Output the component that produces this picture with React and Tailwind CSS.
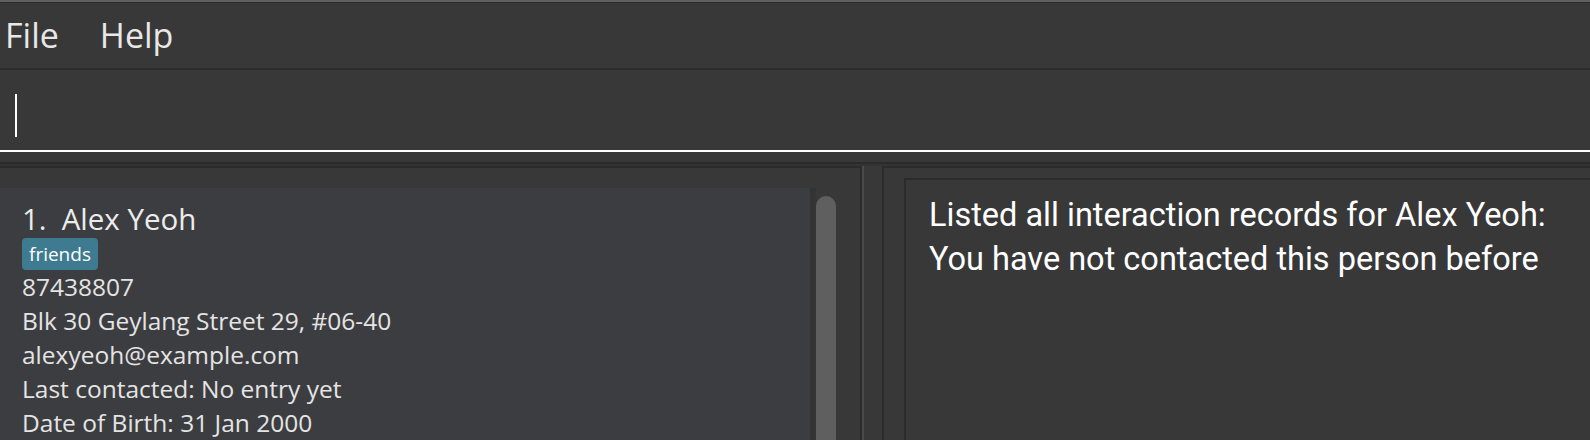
import React from "react";

const details = [
  "87438807",
  "Blk 30 Geylang Street 29, #06-40",
  "alexyeoh@example.com",
  "Last contacted: No entry yet",
  "Date of Birth: 31 Jan 2000",
];

export default function App() {
  return (
    <div className="w-[1590px] h-[440px] overflow-hidden bg-[#383838] flex flex-col font-['Open_Sans',sans-serif]">
      <div className="h-[2px] shrink-0 bg-[#5f5f5f]" />
      <div className="h-[1px] shrink-0 bg-[#2b2b2b]" />
      {/* menu bar */}
      <div className="h-[65px] shrink-0 flex items-center text-[34px] text-[#e8e8e8]">
        <span className="ml-[5px]">File</span>
        <span className="ml-[41px]">Help</span>
      </div>
      <div className="h-[2px] shrink-0 bg-[#2b2b2b]" />
      {/* command box */}
      <div className="h-[80px] shrink-0 flex items-start pl-[15px] pt-[24px]">
        <div className="w-[2px] h-[43px] bg-white" />
      </div>
      <div className="h-[2px] shrink-0 bg-white" />
      <div className="h-[10px] shrink-0" />
      <div className="h-[2px] shrink-0 bg-[#2b2b2b]" />
      <div className="h-[2px] shrink-0 bg-[#333333]" />
      {/* main split */}
      <div className="flex flex-1 min-h-0">
        {/* left panel */}
        <div className="w-[862px] shrink-0 border-t-2 border-r-2 border-[#2b2b2b] flex flex-col">
          <div className="h-[20px] shrink-0" />
          <div className="flex flex-1 min-h-0">
            <div className="w-[810px] shrink-0 bg-[#3c3d40] pl-[22px] pt-[13px] text-[#e4e4e4]">
              <div className="flex gap-[15px] text-[29.5px] leading-[36px] text-[#ececec]">
                <span>1.</span>
                <span>Alex Yeoh</span>
              </div>
              <div className="mt-[1px] flex">
                <span className="h-[32px] px-[7px] rounded-[4px] bg-[#3e7b91] text-white text-[19px] leading-[32px]">
                  friends
                </span>
              </div>
              {details.map((d) => (
                <div key={d} className="text-[24.5px] leading-[34px]">
                  {d}
                </div>
              ))}
            </div>
            <div className="w-[6px] shrink-0 bg-[#343434]" />
            <div className="w-[20px] shrink-0 pt-[8px] flex flex-col">
              <div className="flex-1 rounded-t-[10px] bg-[#5f5f5f]" />
            </div>
          </div>
        </div>
        {/* divider */}
        <div className="w-[2px] shrink-0 bg-[#4a4a4a]" />
        <div className="w-[18px] shrink-0" />
        {/* right panel */}
        <div className="flex-1 border-t-2 border-l-2 border-[#2b2b2b] pl-[20px] pt-[10px] flex flex-col">
          <div className="flex-1 border-t-2 border-l-2 border-[#2b2b2b] pl-[23px] pt-[13px] font-['Roboto',sans-serif] text-white text-[32.5px] leading-[44px]">
            <div>Listed all interaction records for Alex Yeoh:</div>
            <div>You have not contacted this person before</div>
          </div>
        </div>
      </div>
    </div>
  );
}
